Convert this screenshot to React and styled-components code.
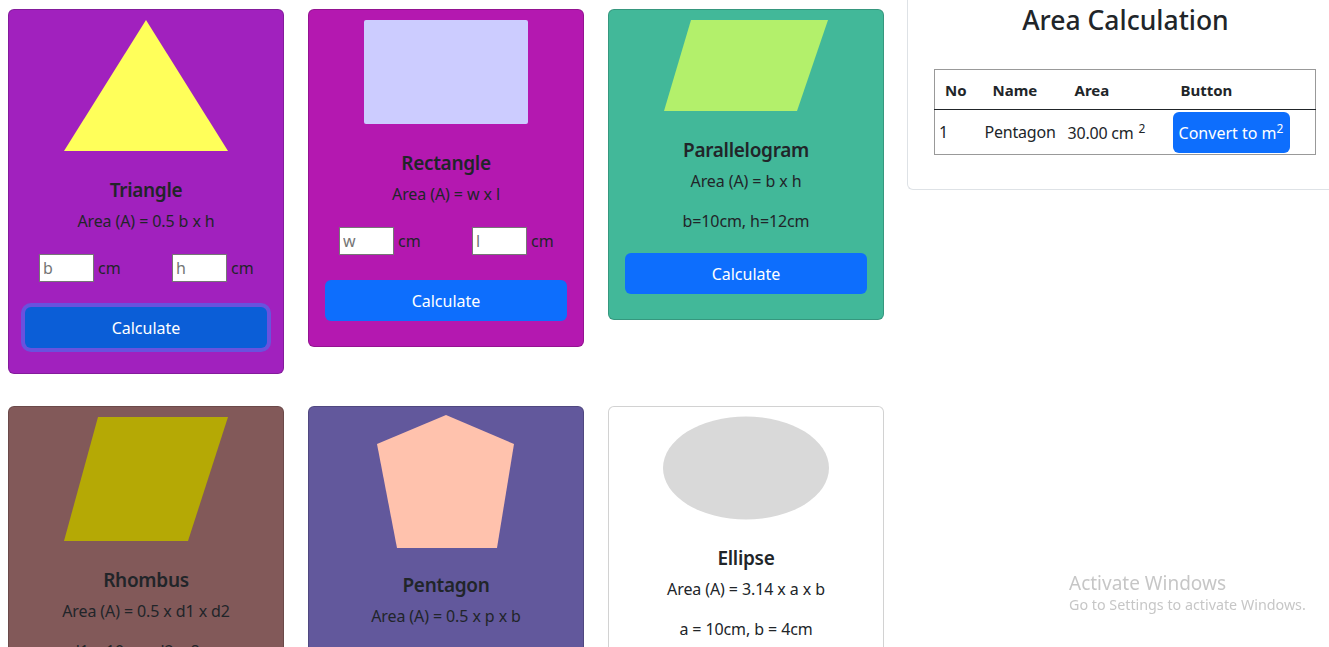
import styled, { createGlobalStyle } from 'styled-components';

const GlobalStyle = createGlobalStyle`
  html, body {
    margin: 0;
    padding: 0;
    overflow: hidden;
    background: #fff;
  }
  body {
    font-family: "Noto Sans", "Open Sans", sans-serif;
    color: #212529;
    font-size: 16px;
  }
  * {
    box-sizing: border-box;
  }
`;

const Page = styled.div.attrs({
  className: 'Page'
})`
  display: flex;
  align-items: flex-start;
  width: 1329px;
`;

const ShapeGrid = styled.div.attrs({
  className: 'ShapeGrid'
})`
  display: grid;
  grid-template-columns: repeat(3, 276px);
  column-gap: 24px;
  row-gap: 32px;
  align-items: start;
  padding: 9px 0 0 8px;
`;

const Card = styled.div.attrs({
  className: 'Card'
})`
  background-color: ${({ $bg }) => $bg};
  border: 1px solid rgba(0, 0, 0, 0.175);
  border-radius: 6px;
  padding: 10px 16px 25px;
  text-align: center;
  color: #212529;
`;

const Shape = styled.svg`
  display: block;
  margin: 0 auto;
  overflow: visible;
`;

const Title = styled.h5`
  margin: 27px 0 0;
  font-size: 19px;
  font-weight: 600;
  letter-spacing: -0.3px;
  line-height: 24px;
`;

const Formula = styled.p`
  margin: 7px 0 0;
  line-height: 24px;
  letter-spacing: -0.1px;
`;

const Note = styled.p`
  margin: 16px 0 0;
  line-height: 24px;
  letter-spacing: -0.1px;
`;

const InputRow = styled.div`
  display: grid;
  grid-template-columns: 133px 1fr;
  padding-left: 14px;
  margin-top: 21px;
  height: 28px;
  text-align: left;
`;

const InputGroup = styled.label`
  display: flex;
  align-items: center;
  gap: 4px;
`;

const SizeInput = styled.input`
  width: 55px;
  height: 28px;
  border: 1px solid #767676;
  border-radius: 0;
  padding: 1px 3px;
  font: inherit;
  background: #fff;
  &::placeholder {
    color: #757575;
  }
`;

const CalcButton = styled.button`
  display: block;
  width: 100%;
  height: 41px;
  margin-top: ${({ $gap }) => $gap}px;
  border: none;
  border-radius: 6px;
  background-color: ${({ $focused }) => ($focused ? '#0b5ed7' : '#0d6efd')};
  box-shadow: ${({ $focused }) => ($focused ? '0 0 0 4px rgba(49, 132, 253, 0.5)' : 'none')};
  color: #fff;
  font: inherit;
  cursor: pointer;
`;

const ResultPanel = styled.div.attrs({
  className: 'ResultPanel'
})`
  margin-left: 23px;
  width: 436px;
  height: 190px;
  flex-shrink: 0;
  border: 1px solid #dee2e6;
  border-top: none;
  border-right: none;
  border-bottom-left-radius: 6px;
`;

const PanelTitle = styled.h3`
  margin: 3px 0 0;
  text-align: center;
  font-size: 26.5px;
  font-weight: 500;
  line-height: 34px;
`;

const ResultTable = styled.table`
  margin: 32px 0 0 26px;
  width: 382px;
  border-collapse: collapse;
  border: 1px solid #999;
  table-layout: fixed;
`;

const HeadCell = styled.th`
  width: ${({ $w }) => $w}px;
  padding: 0 0 0 ${({ $pad }) => $pad}px;
  height: 40px;
  text-align: left;
  font-weight: 700;
  font-size: 15px;
  border-bottom: 1px solid #212529;
`;

const BodyCell = styled.td`
  padding: 1px 0 1px ${({ $pad }) => $pad}px;
  height: 45px;
  vertical-align: middle;
  white-space: nowrap;
  letter-spacing: -0.2px;
`;

const Sup = styled.sup`
  font-size: 12px;
  margin-left: 5px;
`;

const ConvertButton = styled.button`
  width: 117px;
  height: 41px;
  border: none;
  border-radius: 6px;
  background-color: #0d6efd;
  color: #fff;
  font: inherit;
  padding: 0;
  sup {
    font-size: 12px;
  }
`;

const Watermark = styled.div.attrs({
  className: 'Watermark'
})`
  position: fixed;
  left: 1069px;
  top: 572px;
  color: rgba(160, 160, 160, 0.6);
  font-family: "Noto Sans", sans-serif;
  line-height: 1.2;
  pointer-events: none;

  strong {
    display: block;
    font-weight: 400;
    font-size: 19px;
  }
  span {
    display: block;
    font-size: 14.3px;
    margin-top: 1px;
  }
`;

const shapes = {
  triangle: (
    <Shape width="164" height="131" viewBox="0 0 164 131">
      <polygon points="82,0 164,131 0,131" fill="#ffff5a" />
    </Shape>
  ),
  rectangle: (
    <Shape width="164" height="104" viewBox="0 0 164 104">
      <rect x="0" y="0" width="164" height="104" rx="2" fill="#ccccff" />
    </Shape>
  ),
  parallelogram: (
    <Shape width="164" height="91" viewBox="0 0 164 91">
      <polygon points="27,0 164,0 133,91 0,91" fill="#b3f06b" />
    </Shape>
  ),
  rhombus: (
    <Shape width="164" height="124" viewBox="0 0 164 124">
      <polygon points="34,0 164,0 124,124 0,124" fill="#b5a905" />
    </Shape>
  ),
  pentagon: (
    <Shape width="164" height="129" viewBox="0 0 164 129">
      <polygon points="82,-2 150,27 133,131 33,131 13,27" fill="#ffc2ad" />
    </Shape>
  ),
  ellipse: (
    <Shape width="166" height="102" viewBox="0 0 166 102">
      <ellipse cx="83" cy="51" rx="83" ry="51.5" fill="#d9d9d9" />
    </Shape>
  ),
};

const InputPair = ({ first, second }) => (
  <InputRow>
    <InputGroup>
      <SizeInput placeholder={first} />
      cm
    </InputGroup>
    <InputGroup>
      <SizeInput placeholder={second} />
      cm
    </InputGroup>
  </InputRow>
);

export default function App() {
  return (
    <>
      <GlobalStyle />
      <Page>
        <ShapeGrid>
          <Card $bg="#a121be">
            {shapes.triangle}
            <Title>Triangle</Title>
            <Formula>Area (A) = 0.5 b x h</Formula>
            <InputPair first="b" second="h" />
            <CalcButton $gap={25} $focused>Calculate</CalcButton>
          </Card>

          <Card $bg="#b418b0">
            {shapes.rectangle}
            <Title>Rectangle</Title>
            <Formula>Area (A) = w x l</Formula>
            <InputPair first="w" second="l" />
            <CalcButton $gap={25}>Calculate</CalcButton>
          </Card>

          <Card $bg="#42b899">
            {shapes.parallelogram}
            <Title>Parallelogram</Title>
            <Formula>Area (A) = b x h</Formula>
            <Note>b=10cm, h=12cm</Note>
            <CalcButton $gap={20}>Calculate</CalcButton>
          </Card>

          <Card $bg="#825959">
            {shapes.rhombus}
            <Title>Rhombus</Title>
            <Formula>Area (A) = 0.5 x d1 x d2</Formula>
            <Note>d1 = 10cm, d2 = 8cm</Note>
            <CalcButton $gap={20}>Calculate</CalcButton>
          </Card>

          <Card $bg="#62589c">
            {shapes.pentagon}
            <Title>Pentagon</Title>
            <Formula>Area (A) = 0.5 x p x b</Formula>
            <Note>p = 15cm, b = 4cm</Note>
            <CalcButton $gap={20}>Calculate</CalcButton>
          </Card>

          <Card $bg="#ffffff">
            {shapes.ellipse}
            <Title>Ellipse</Title>
            <Formula>Area (A) = 3.14 x a x b</Formula>
            <Note>a = 10cm, b = 4cm</Note>
            <CalcButton $gap={20}>Calculate</CalcButton>
          </Card>
        </ShapeGrid>

        <ResultPanel>
          <PanelTitle>Area Calculation</PanelTitle>
          <ResultTable>
            <thead>
              <tr>
                <HeadCell $w={42} $pad={10}>No</HeadCell>
                <HeadCell $w={83} $pad={16}>Name</HeadCell>
                <HeadCell $w={105} $pad={15}>Area</HeadCell>
                <HeadCell $pad={16}>Button</HeadCell>
              </tr>
            </thead>
            <tbody>
              <tr>
                <BodyCell $pad={4}>1</BodyCell>
                <BodyCell $pad={8}>Pentagon</BodyCell>
                <BodyCell $pad={8}>
                  30.00 cm<Sup>2</Sup>
                </BodyCell>
                <BodyCell $pad={8}>
                  <ConvertButton>
                    Convert to m<sup>2</sup>
                  </ConvertButton>
                </BodyCell>
              </tr>
            </tbody>
          </ResultTable>
        </ResultPanel>
      </Page>

      <Watermark>
        <strong>Activate Windows</strong>
        <span>Go to Settings to activate Windows.</span>
      </Watermark>
    </>
  );
}
